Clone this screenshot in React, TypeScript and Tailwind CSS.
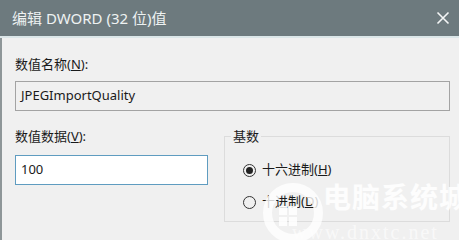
import React from "react";

const font = '"Noto Sans", "Noto Sans CJK SC", sans-serif';

export default function App() {
  return (
    <div
      className="relative w-[459px] h-[240px] overflow-hidden bg-[#f0f0f0] text-[#1a1a1a]"
      style={{ fontFamily: font }}
    >
      {/* title bar */}
      <div className="h-[36px] bg-[#6d7a7e] flex items-center justify-between pl-[12px] pr-[8px]">
        <span className="text-[15px] text-[#eef2f2] leading-none">编辑 DWORD (32 位)值</span>
        <svg width="14" height="14" viewBox="0 0 14 14" className="mr-[1px]">
          <path d="M1.5 1.5 L12.5 12.5 M12.5 1.5 L1.5 12.5" stroke="#f4f6f6" strokeWidth="1.6" />
        </svg>
      </div>
      <div className="h-[2px] bg-[#dbe6e8]" />
      <div className="flex h-[202px]">
        <div className="w-[2px] bg-[#8e9698]" />
        <div className="flex-1 pl-[13px] pr-[9px] pt-[16px]">
          <div className="text-[13px] leading-[20px]">数值名称(<span className="underline">N</span>):</div>
          <div className="mt-[7px] h-[30px] border border-[#a3a3a3] bg-[#f0f0f0] flex items-center pl-[5px] text-[13px]">
            JPEGImportQuality
          </div>
          <div className="flex mt-[15px]">
            <div className="w-[193px]">
              <div className="text-[13px] leading-[20px]">数值数据(<span className="underline">V</span>):</div>
              <div className="mt-[9px] h-[30px] border border-[#5f9cc0] bg-white flex items-center pl-[5px] text-[13px]">
                100
              </div>
            </div>
            <div className="ml-[16px] flex-1 relative pt-[10px]">
              <div className="border border-[#dcdcdc] h-[86px] pt-[23px] pl-[18px]">
                <div className="flex items-center h-[20px] text-[13px]">
                  <span className="w-[13px] h-[13px] rounded-full border border-[#333] flex items-center justify-center mr-[6px]">
                    <span className="w-[7px] h-[7px] rounded-full bg-[#222]" />
                  </span>
                  十六进制(<span className="underline">H</span>)
                </div>
                <div className="flex items-center h-[20px] mt-[12px] text-[13px]">
                  <span className="w-[13px] h-[13px] rounded-full border border-[#333] mr-[6px]" />
                  十进制(<span className="underline">D</span>)
                </div>
              </div>
              <span className="absolute left-[7px] top-0 px-[2px] bg-[#f0f0f0] text-[13px] leading-[20px]">基数</span>
            </div>
          </div>
        </div>
      </div>
      {/* watermark */}
      <div className="absolute left-[263px] top-[183px] w-[60px] h-[60px] rounded-full border-[9px] border-white/80" />
      <div className="absolute left-[279px] top-[206px] grid grid-cols-2 gap-[2px]">
        <span className="w-[8px] h-[9px] bg-white/85" />
        <span className="w-[8px] h-[9px] bg-white/85" />
        <span className="w-[8px] h-[9px] bg-white/85" />
        <span className="w-[8px] h-[9px] bg-white/85" />
      </div>
      <div
        className="absolute left-[323px] top-[182px] text-[28px] font-bold text-white/85 leading-none tracking-[1px] whitespace-nowrap"
        style={{ fontFamily: '"Noto Sans CJK SC", sans-serif' }}
      >
        电脑系统城
      </div>
      <div
        className="absolute left-[292px] top-[222px] text-[20px] text-white/60 leading-none tracking-[2px] whitespace-nowrap"
        style={{ fontFamily: '"Liberation Serif", serif' }}
      >
        www.dnxtc.net
      </div>
    </div>
  );
}
